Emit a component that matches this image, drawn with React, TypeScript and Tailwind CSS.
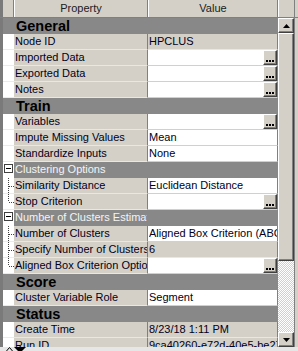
type Tree = "mid" | "end";

type Row =
  | { kind: "cat"; label: string }
  | { kind: "group"; label: string }
  | { kind: "prop"; label: string; value?: string; readOnly?: boolean; button?: boolean; tree?: Tree };

const rows: Row[] = [
  { kind: "cat", label: "General" },
  { kind: "prop", label: "Node ID", value: "HPCLUS", readOnly: true },
  { kind: "prop", label: "Imported Data", button: true },
  { kind: "prop", label: "Exported Data", button: true },
  { kind: "prop", label: "Notes", button: true },
  { kind: "cat", label: "Train" },
  { kind: "prop", label: "Variables", button: true },
  { kind: "prop", label: "Impute Missing Values", value: "Mean" },
  { kind: "prop", label: "Standardize Inputs", value: "None" },
  { kind: "group", label: "Clustering Options" },
  { kind: "prop", label: "Similarity Distance", value: "Euclidean Distance", tree: "mid" },
  { kind: "prop", label: "Stop Criterion", button: true, tree: "end" },
  { kind: "group", label: "Number of Clusters Estimation" },
  { kind: "prop", label: "Number of Clusters", value: "Aligned Box Criterion (ABC)", tree: "mid" },
  { kind: "prop", label: "Specify Number of Clusters", value: "6", readOnly: true, tree: "mid" },
  { kind: "prop", label: "Aligned Box Criterion Options", button: true, tree: "end" },
  { kind: "cat", label: "Score" },
  { kind: "prop", label: "Cluster Variable Role", value: "Segment" },
  { kind: "cat", label: "Status" },
  { kind: "prop", label: "Create Time", value: "8/23/18 1:11 PM", readOnly: true },
  { kind: "prop", label: "Run ID", value: "9ca40260-e72d-40e5-be27-5d1c0a", readOnly: true },
];

function TreeLine({ kind }: { kind: Tree }) {
  return (
    <svg width="11" height="16" className="block" shapeRendering="crispEdges">
      <line x1="5.5" y1="0" x2="5.5" y2={kind === "mid" ? 16 : 8} stroke="#404040" strokeDasharray="1 1" />
      <line x1="6" y1="8.5" x2="11" y2="8.5" stroke="#404040" strokeDasharray="1 1" />
    </svg>
  );
}

function MinusBox() {
  return (
    <svg width="11" height="16" className="block" shapeRendering="crispEdges">
      <rect x="1.5" y="2.5" width="8" height="8" fill="#ffffff" stroke="#404040" />
      <line x1="3" y1="6.5" x2="8" y2="6.5" stroke="#000000" />
    </svg>
  );
}

function DotsButton() {
  return (
    <div className="h-[15px] w-[14px] shrink-0 border-t border-l border-t-white border-l-white border-b border-r border-b-[#404040] border-r-[#404040] bg-[#d4d0c8] shadow-[inset_-1px_-1px_0_#808080]">
      <svg width="12" height="13" className="block">
        <rect x="2" y="9" width="2" height="2" fill="#000" />
        <rect x="5" y="9" width="2" height="2" fill="#000" />
        <rect x="8" y="9" width="2" height="2" fill="#000" />
      </svg>
    </div>
  );
}

function GridRow({ row }: { row: Row }) {
  if (row.kind === "cat") {
    return (
      <div className="flex h-[16px] bg-[#888888]">
        <div className="w-[11px] shrink-0" />
        <div className="pl-[2px] text-[14.5px] font-bold leading-[16px] text-black">{row.label}</div>
      </div>
    );
  }
  if (row.kind === "group") {
    return (
      <div className="flex h-[16px]">
        <div className="w-[11px] shrink-0 bg-white">
          <MinusBox />
        </div>
        <div className="flex w-[264px] bg-[#888888]">
          <div className="w-[133px] shrink-0 overflow-hidden whitespace-nowrap pl-px leading-[15px] text-[#f4f4f4]">
            {row.label}
          </div>
        </div>
      </div>
    );
  }
  return (
    <div className="flex h-[16px]">
      <div className="w-[11px] shrink-0 border-b border-[#ebebeb] bg-white">
        {row.tree && <TreeLine kind={row.tree} />}
      </div>
      <div className="w-[134px] shrink-0 overflow-hidden whitespace-nowrap border-r border-b border-r-[#808080] border-b-[#e9e7e3] bg-[#d4d0c8] pl-px leading-[15px] text-[#000020]">
        {row.label}
      </div>
      <div
        className={`flex w-[130px] shrink-0 overflow-hidden whitespace-nowrap border-r border-b border-r-[#808080] pl-px leading-[15px] text-[#000020] ${
          row.readOnly ? "bg-[#d4d0c8] border-b-[#e9e7e3]" : "bg-white border-b-[#d4d0c8]"
        }`}
      >
        <div className="flex-1 overflow-hidden">{row.value}</div>
        {row.button && <DotsButton />}
      </div>
    </div>
  );
}

function ScrollButton({ up }: { up?: boolean }) {
  return (
    <div className="flex h-[15px] items-center justify-center border-t border-l border-t-white border-l-white border-b border-r border-b-[#404040] border-r-[#404040] bg-[#d4d0c8] shadow-[inset_-1px_-1px_0_#808080]">
      <svg width="7" height="4" className="block">
        <path d={up ? "M3.5 0 L7 4 L0 4 Z" : "M0 0 L7 0 L3.5 4 Z"} fill="#000" />
      </svg>
    </div>
  );
}

export default function App() {
  return (
    <div className="flex h-[351px] w-[298px] flex-col overflow-hidden bg-[#d4d0c8] font-['Liberation_Sans',Arial,sans-serif] text-[11px]">
      {/* header */}
      <div className="flex h-[18px] shrink-0 border-b border-[#808080]">
        <div className="w-[3px] bg-[#7a7a7a]" />
        <div className="w-[11px] border-r border-[#808080] bg-[#d4d0c8]" />
        <div className="flex w-[134px] items-center justify-center border-l border-r border-l-white border-r-[#808080] text-[#202020]">
          Property
        </div>
        <div className="flex w-[130px] items-center justify-center border-l border-r border-l-white border-r-[#808080] text-[#202020]">
          Value
        </div>
        <div className="w-[16px] border-l border-white" />
        <div className="w-px bg-[#808080]" />
      </div>

      {/* body */}
      <div className="flex h-[329px] shrink-0">
        <div className="w-[3px] bg-[#7a7a7a]" />
        <div className="flex w-[275px] flex-col overflow-hidden">
          {rows.map((row) => (
            <GridRow key={row.label} row={row} />
          ))}
        </div>
        <div className="flex w-[16px] flex-col">
          <ScrollButton up />
          <div className="h-[228px] border-t border-l border-t-white border-l-white border-b border-r border-b-[#404040] border-r-[#404040] bg-[#d4d0c8] shadow-[inset_-1px_-1px_0_#808080]" />
          <div className="flex-1 bg-[repeating-conic-gradient(#ffffff_0_25%,#d4d0c8_0_50%)] bg-[length:2px_2px]" />
          <ScrollButton />
        </div>
        <div className="w-px bg-[#808080]" />
      </div>

      {/* bottom strip */}
      <div className="flex h-[4px] shrink-0 bg-[#e6e6e6] pl-[6px]">
        <svg width="22" height="4" className="block">
          <path d="M3.5 0.5 L6.5 4 M3.5 0.5 L0.5 4" stroke="#000" fill="none" />
          <path d="M8 0 L20 0 L14 6 Z" fill="#000" />
        </svg>
      </div>
    </div>
  );
}
